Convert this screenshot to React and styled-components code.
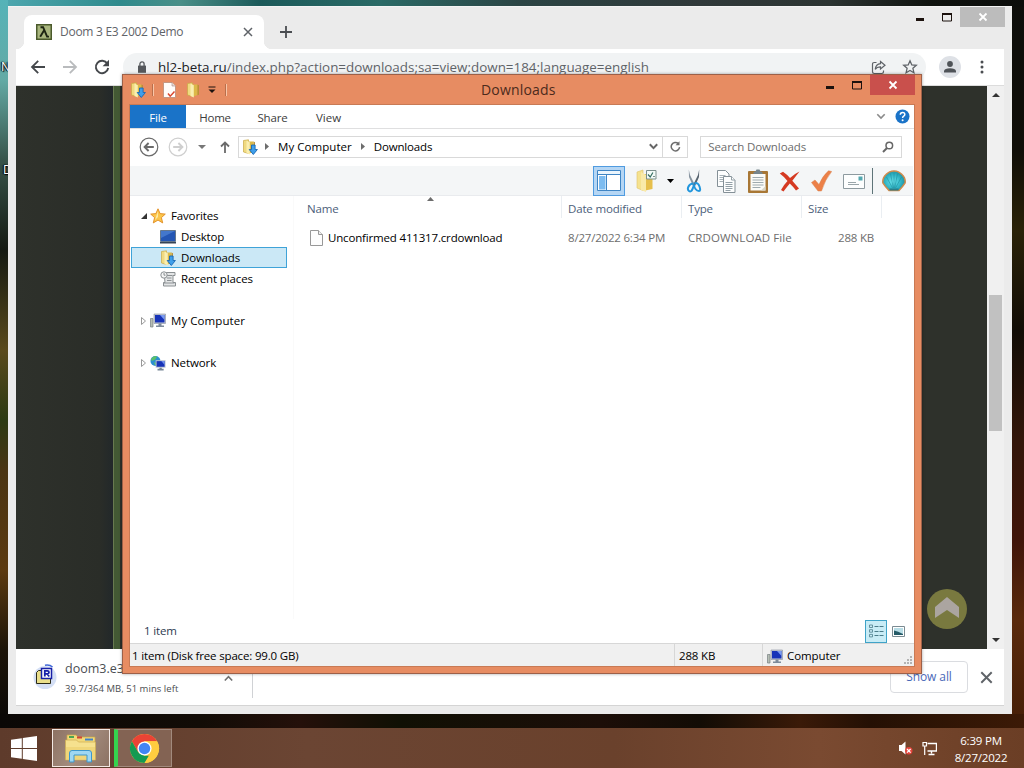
import React from "react";
import styled, { createGlobalStyle } from "styled-components";

const GlobalStyle = createGlobalStyle`
    * {
        box-sizing: border-box;
    }
    body {
        margin: 0;
        overflow: hidden;
        font-family: "Open Sans", "Noto Sans", sans-serif;
    }
    svg {
        display: block;
        flex-shrink: 0;
    }
`

const Desktop = styled.main`
    position: relative;
    width: 1024px;
    height: 768px;
    overflow: hidden;
    background:
        linear-gradient(180deg, #55b3b8 0, #63aaa5 80px, #38544a 160px, #151a12 250px, #5a4a1c 350px, #2c3a12 420px, #4a3412 470px, #5c3a10 570px, #1c1408 650px, #0c0906 714px) 0 0 / 8px 714px no-repeat,
        linear-gradient(90deg, #4fa8b0 0, #2f8a8c 120px, #4a8f88 180px, #1c5a5a 260px, #2a6a66 380px, #2b4444 520px, #30393a 700px, #2c3432 830px, #10130f 930px, #0b0d0b 1024px) 0 0 / 1024px 7px no-repeat,
        linear-gradient(180deg, #0d0e0b 0, #100e08 150px, #2a2208 230px, #120d06 330px, #33160a 440px, #40150a 540px, #5a2a0c 620px, #482008 714px) 1012px 0 / 12px 714px no-repeat,
        linear-gradient(90deg, #0b0806 0, #120c06 200px, #24100a 300px, #101004 400px, #1c0e08 600px, #120c05 700px, #3a1a08 800px, #241004 870px, #3c1a06 1024px);
`

const IconCaption = styled.span`
    position: absolute;
    left: ${({ $x }) => $x}px;
    top: ${({ $y }) => $y}px;
    font-size: 12px;
    line-height: 14px;
    color: white;
    text-shadow: 1px 1px 1px black, 0 0 2px black, -1px 0 1px black;
`

const Text = styled.span`
    font-size: ${({ $size }) => $size || 11.5}px;
    letter-spacing: ${({ $track }) => $track ?? -0.17}px;
    color: ${({ $color }) => $color || "black"};
    line-height: 16px;
    white-space: nowrap;
`

/* ---------- browser ---------- */

const Browser = styled.section`
    position: absolute;
    left: 8px;
    top: 6px;
    width: 1004px;
    height: 708px;
    padding: 0 8px 8px;
    background: #ebebeb;
    border-top: 1px solid #f4f4f4;
    display: flex;
    flex-direction: column;
`

const TabStrip = styled.div`
    height: 42px;
    display: flex;
    align-items: flex-start;
    padding-left: 8px;
    margin-right: -1px;
`

const Tab = styled.div`
    position: relative;
    width: 240px;
    height: 34px;
    margin-top: 8px;
    padding: 0 11px 0 12px;
    background: white;
    border-radius: 8px 8px 0 0;
    display: flex;
    align-items: center;
    gap: 8px;
    &::before, &::after {
        content: "";
        position: absolute;
        bottom: 0;
        width: 8px;
        height: 8px;
    }
    &::before {
        left: -8px;
        background: radial-gradient(circle at 0 0, transparent 8px, white 8.5px);
    }
    &::after {
        right: -8px;
        background: radial-gradient(circle at 100% 0, transparent 8px, white 8.5px);
    }
`

const TabName = styled(Text)`
    flex: 1;
`

const NewTab = styled.div`
    margin: 19px 0 0 16px;
`

const Controls = styled.div`
    margin-left: auto;
    display: flex;
    align-items: flex-start;
`

const ControlGlyph = styled.div`
    width: 27px;
    height: 20px;
    display: flex;
    justify-content: center;
`

const CloseButton = styled.div`
    width: 45px;
    height: 20px;
    background: ${({ $color }) => $color};
    display: flex;
    align-items: center;
    justify-content: center;
`

const BrowserBar = styled.div`
    height: 37px;
    background: white;
    border-bottom: 1px solid #dcdcdc;
    display: flex;
    align-items: center;
    padding: 0 20px 0 13px;
`

const BarButton = styled.div`
    width: 32px;
`

const Omnibox = styled.div`
    flex: 1;
    height: 28px;
    margin-left: -2px;
    border-radius: 14px;
    background: #f1f3f4;
    padding: 0 8px 0 15px;
    display: flex;
    align-items: center;
`

const Url = styled(Text)`
    flex: 1;
    margin-left: 12px;
    b {
        font-weight: normal;
        color: #202124;
    }
`

const Avatar = styled.div`
    width: 22px;
    height: 22px;
    margin: 0 19px 0 13px;
    border-radius: 50%;
    background: #dee1e6;
    display: flex;
    align-items: center;
    justify-content: center;
`

const Page = styled.div`
    flex: 1;
    display: flex;
    background: linear-gradient(90deg, #2e312b 0, #2a2d28 84px, #22282a 97px, #687a50 97px, #687a50 98px, #435934 98px, #435934 104px, #2e312b 104px);
`

const PageBody = styled.div`
    flex: 1;
    display: flex;
    align-items: flex-end;
    justify-content: flex-end;
    padding: 0 20px 20px 0;
`

const PageScroll = styled.div`
    width: 17px;
    background: #f0f0f0;
    display: flex;
    flex-direction: column;
    align-items: center;
    padding: 7px 0;
`

const Thumb = styled.div`
    width: 13px;
    height: 136px;
    margin: 198px 0 auto;
    background: #c1c1c1;
`

const Shelf = styled.div`
    height: 57px;
    background: white;
    border-bottom: 1px solid #d4d4d4;
    display: flex;
    align-items: center;
`

const ShelfItem = styled.div`
    width: 237px;
    height: 44px;
    margin-top: -2px;
    padding-left: 17px;
    border-right: 1px solid #d0d2d5;
    display: flex;
    align-items: center;
    gap: 8px;
`

const ShelfText = styled.div`
    flex: 1;
    padding-top: 5px;
    display: flex;
    flex-direction: column;
    gap: 4px;
`

const ShelfChevron = styled.div`
    margin-right: 18px;
    padding-top: 4px;
`

const ShowAll = styled.div`
    margin-left: auto;
    width: 78px;
    height: 32px;
    border: 1px solid #dadce0;
    border-radius: 4px;
    display: flex;
    align-items: center;
    justify-content: center;
`

const ShelfClose = styled.div`
    margin: 0 11px 0 12px;
`

/* ---------- file manager ---------- */

const Explorer = styled.section`
    position: absolute;
    left: 122px;
    top: 74px;
    width: 800px;
    height: 600px;
    background: #e78c62;
    border: 1px solid #9d6048;
    box-shadow: 0 0 3px rgba(0, 0, 0, 0.35);
    padding: 0 6px 6px;
    display: flex;
    flex-direction: column;
`

const TitleBar = styled.header`
    position: relative;
    height: 29px;
    display: flex;
    align-items: flex-start;
`

const QuickAccess = styled.div`
    display: flex;
    align-items: center;
    height: 29px;
    padding-left: 1px;
`

const QuickRule = styled.div`
    width: 1px;
    height: 12px;
    margin: 0 ${({ $after }) => $after}px 0 ${({ $before }) => $before}px;
    background: #f9c6a8;
    box-shadow: -1px 0 #b96f4c;
`

const WindowTitle = styled(Text)`
    position: absolute;
    left: 352px;
    top: 7px;
`

const Client = styled.div`
    flex: 1;
    border: 1px solid #c87a55;
    background: white;
    display: flex;
    flex-direction: column;
`

const RibbonTabs = styled.div`
    height: 24px;
    border-bottom: 1px solid #dfdfe0;
    display: flex;
    align-items: center;
`

const FileTab = styled.div`
    width: 56px;
    height: 23px;
    background: #1a73c8;
    text-align: center;
    line-height: 22px;
`

const RibbonTab = styled.div`
    width: ${({ $w }) => $w}px;
    height: 23px;
    line-height: 23px;
    text-align: center;
`

const RibbonEnd = styled.div`
    margin-left: auto;
    padding: 0 4px 1px 0;
    display: flex;
    align-items: center;
    gap: 9px;
`

const AddressRow = styled.div`
    height: 37px;
    padding: 0 12px 2px 9px;
    display: flex;
    align-items: center;
`

const NavButton = styled.div`
    margin-right: ${({ $gap }) => $gap}px;
`

const AddressBar = styled.div`
    width: 451px;
    height: 22px;
    border: 1px solid #d9d9d9;
    display: flex;
    align-items: center;
    padding-left: 3px;
`

const Crumb = styled(Text)`
    margin: 0 ${({ $after }) => $after || 0}px 0 ${({ $before }) => $before}px;
`

const RefreshBox = styled.div`
    width: 25px;
    height: 20px;
    margin-left: 4px;
    border-left: 1px solid #d9d9d9;
    display: flex;
    align-items: center;
    justify-content: center;
`

const SearchBox = styled.div`
    width: 202px;
    height: 22px;
    margin-left: 12px;
    border: 1px solid #d9d9d9;
    padding: 0 7px 0 7px;
    display: flex;
    align-items: center;
    justify-content: space-between;
`

const ToolBar = styled.div`
    height: 30px;
    margin-right: 1px;
    background: #f4f6f7;
    border-bottom: 1px solid #e9ebee;
    display: flex;
    align-items: center;
    justify-content: flex-end;
    padding-right: 7px;
`

const PaneToggle = styled.div`
    width: 32px;
    height: 30px;
    margin-bottom: -1px;
    border: 1px solid #4f9be0;
    background: #b5d6f4;
    display: flex;
    align-items: center;
    justify-content: center;
`

const Tool = styled.div`
    margin-left: ${({ $gap }) => $gap}px;
    padding-top: 1px;
`

const ToolRule = styled.div`
    width: 1px;
    height: 26px;
    margin-left: 7px;
    background: #5e7478;
`

const Panes = styled.div`
    flex: 1;
    display: flex;
`

const Tree = styled.nav`
    width: 164px;
    padding-top: 9px;
    border-right: 1px solid #fafafa;
`

const TreeRow = styled.div`
    height: 21px;
    width: 156px;
    margin: 0 0 ${({ $after }) => $after || 0}px 1px;
    padding-left: ${({ $depth }) => $depth ? 28 : 8}px;
    border: 1px solid ${({ $selected }) => $selected ? "#3fa3d8" : "transparent"};
    background: ${({ $selected }) => $selected ? "#cbe8f6" : "transparent"};
    display: flex;
    align-items: center;
    gap: ${({ $depth }) => $depth ? 5 : 2}px;
`

const TreeName = styled(Text)`
    margin-left: ${({ $root }) => $root ? 3 : 0}px;
`

const FileList = styled.div`
    flex: 1;
`

const HeaderRow = styled.div`
    position: relative;
    height: 22px;
    display: flex;
`

const HeaderCell = styled.div`
    width: ${({ $w }) => $w}px;
    height: 22px;
    padding: 4px 0 0 ${({ $pad }) => $pad || 6}px;
    border-right: 1px solid #eaeef2;
    display: flex;
    align-items: center;
`

const SortMark = styled.div`
    position: absolute;
    left: 133px;
    top: 1px;
`

const FileRow = styled.div`
    height: 22px;
    margin-top: 9px;
    display: flex;
    align-items: center;
`

const FileCell = styled.div`
    width: ${({ $w }) => $w}px;
    padding: 0 8px 0 ${({ $pad }) => $pad || 6}px;
    display: flex;
    align-items: center;
    gap: 5px;
    justify-content: ${({ $right }) => $right ? "flex-end" : "flex-start"};
`

const Details = styled.div`
    height: 24px;
    padding: 0 9px 0 14px;
    display: flex;
    align-items: center;
`

const ViewMode = styled.div`
    width: 22px;
    height: 23px;
    margin: 0 5px 0 auto;
    border: 1px solid #3fa3c8;
    background: #c8ecf6;
    display: flex;
    align-items: center;
    justify-content: center;
`

const StatusBar = styled.footer`
    height: 23px;
    border-top: 1px solid #d7d7d7;
    background: #f0f0f0;
    display: flex;
`

const StatusCell = styled.div`
    width: ${({ $w }) => $w ? `${$w}px` : "auto"};
    flex: ${({ $w }) => $w ? "none" : 1};
    padding-top: 2px;
    padding-left: ${({ $pad }) => $pad}px;
    border-left: ${({ $rule }) => $rule ? "1px solid #d7d7d7" : "none"};
    display: flex;
    align-items: center;
    gap: 4px;
`

const Grip = styled.div`
    margin: 9px 1px 0 auto;
`

/* ---------- task bar ---------- */

const TaskBar = styled.footer`
    position: absolute;
    left: 0;
    bottom: 0;
    width: 1024px;
    height: 40px;
    background: linear-gradient(90deg, #5e3b2b 0, #6b4533 30%, #6a412c 60%, #7a4a31 80%, #6b3e25 100%);
    display: flex;
    align-items: center;
`

const Start = styled.div`
    width: 52px;
    padding-left: 11px;
`

const TaskButton = styled.div`
    width: 58px;
    height: 38px;
    margin-right: 4px;
    border: 1px solid ${({ $active }) => $active ? "#f3e9e4" : "#a28a7d"};
    border-left: ${({ $progress }) => $progress ? "4px solid #35d44e" : ""};
    background: ${({ $active }) => $active ? "linear-gradient(120deg, #8d7263, #a38c7e 50%, #8d7263)" : "#836353"};
    display: flex;
    align-items: center;
    justify-content: center;
`

const Tray = styled.div`
    margin-left: auto;
    display: flex;
    align-items: center;
    gap: 9px;
`

const Clock = styled.div`
    width: 70px;
    height: 33px;
    margin: 3px 8px 0 0;
    display: flex;
    flex-direction: column;
    align-items: center;
    justify-content: space-between;
`

/* ---------- icons ---------- */

const Minimize = () => (
    <svg width="10" height="18"><path d="M1 12.5h8" stroke="#1c120e" strokeWidth="3" /></svg>
)

const Maximize = () => (
    <svg width="12" height="18"><path d="M1.5 6.5h9v7.5h-9z" fill="none" stroke="#1c120e" /><path d="M1 7h10" stroke="#1c120e" strokeWidth="2" /></svg>
)

const CloseMark = () => (
    <svg width="10" height="10"><path d="M1.5 1.5l7 7m0-7l-7 7" stroke="white" strokeWidth="1.8" /></svg>
)

const ThinX = ({ size = 10, color = "#5f6368" }) => (
    <svg width={size} height={size} viewBox="0 0 10 10"><path d="M1 1l8 8M9 1l-8 8" stroke={color} strokeWidth="1.5" /></svg>
)

const Arrow = ({ back, color }) => (
    <svg width="18" height="18" viewBox="0 0 18 18">
        <g transform={back ? "" : "matrix(-1 0 0 1 18 0)"} fill="none" stroke={color} strokeWidth="1.8">
            <path d="M16 9H3.5M9.2 2.8L3 9l6.2 6.2" />
        </g>
    </svg>
)

const Reload = () => (
    <svg width="18" height="18" viewBox="0 0 18 18">
        <path d="M14.3 5.6A6.2 6.2 0 1 0 15.2 10" fill="none" stroke="#44474b" strokeWidth="1.9" />
        <path d="M16 1.8v6.4H9.6z" fill="#44474b" />
    </svg>
)

const LambdaIcon = () => (
    <svg width="16" height="16" viewBox="0 0 16 16">
        <path d="M.75.75h14.5v14.5H.75z" fill="#a9b67e" stroke="#4b5a2c" strokeWidth="1.5" />
        <path d="M4.5 3.2h2.6l4 9.4h1.9M8 6.5l-3.8 6.3" fill="none" stroke="#1d2412" strokeWidth="1.9" />
    </svg>
)

const Lock = () => (
    <svg width="8" height="12" viewBox="0 0 8 12">
        <path d="M0 4.6h8v7.2H0z" fill="#55585c" />
        <path d="M1.9 5V3a2.1 2.1 0 0 1 4.2 0v2" fill="none" stroke="#55585c" strokeWidth="1.3" />
    </svg>
)

const ShareIcon = () => (
    <svg width="15" height="15" viewBox="0 0 15 15" fill="none" stroke="#5f6368" strokeWidth="1.2">
        <path d="M5.5 2.5H3.2Q1.5 2.5 1.5 4.2v7.6q0 1.7 1.7 1.7h7.6q1.7 0 1.7-1.7V10.5" />
        <path d="M9.5 1.5L14 5.2 9.5 9V6.8Q6 6.6 4.2 9.4 4.8 4 9.5 3.6z" />
    </svg>
)

const StarOutline = () => (
    <svg width="16" height="16" viewBox="0 0 16 16">
        <path d="M8 1.8l1.8 4.1 4.5.4-3.4 3 1 4.4L8 11.4l-3.9 2.3 1-4.4-3.4-3 4.5-.4z" fill="none" stroke="#5f6368" strokeWidth="1.3" />
    </svg>
)

const Person = () => (
    <svg width="14" height="14" viewBox="0 0 14 14" fill="#4f5358">
        <circle cx="7" cy="4" r="2.9" />
        <path d="M1 12.6V11Q1.6 8.2 7 8.2t6 2.8v1.6z" />
    </svg>
)

const Dots = () => (
    <svg width="4" height="14" fill="#4a4d51"><circle cx="2" cy="2" r="1.5" /><circle cx="2" cy="7" r="1.5" /><circle cx="2" cy="12" r="1.5" /></svg>
)

const Triangle = ({ up, w = 8, h = 4, color = "#333" }) => (
    <svg width={w} height={h}><path d={up ? `M0 ${h}H${w}L${w / 2} 0z` : `M0 0H${w}L${w / 2} ${h}z`} fill={color} /></svg>
)

const Chevron = ({ up, w = 9, color = "#707070", weight = 1.6 }) => (
    <svg width={w} height="7" viewBox="0 0 9 7"><path d={up ? "M.8 5.5L4.5 1.6l3.7 3.9" : "M.8 1.2l3.7 3.9 3.7-3.9"} fill="none" stroke={color} strokeWidth={weight} /></svg>
)

const ToTop = () => (
    <svg width="40" height="40" viewBox="0 0 40 40">
        <circle cx="20" cy="20" r="20" fill="#79793f" />
        <path d="M20 8L32 18v11l-12-8-12 8V18z" fill="#aba5a0" />
    </svg>
)

const RarIcon = () => (
    <svg width="24" height="26" viewBox="0 0 24 26">
        <circle cx="12" cy="14.5" r="11.5" fill="#d4dff5" />
        <path d="M12 2.2Q16.5 1.2 19.5 4" fill="none" stroke="#4068d8" strokeWidth="1.6" />
        <path d="M3.5 9.5l2-2h4v2h8v11h-14z" fill="#eadf8c" stroke="#2b2a18" />
        <path d="M8.5 5.5h10v10h-10z" fill="white" stroke="#1820a8" strokeWidth="1.5" />
        <path d="M11.800 13.500V7.800h2.600q1.600 0 1.600 1.500t-1.600 1.500h-2.400m2 0l2.200 2.700" fill="none" stroke="#1820a8" strokeWidth="1.8" />
    </svg>
)

const Folder = ({ arrow, size = 16 }) => (
    <svg width={size} height={size} viewBox="0 0 16 16">
        <path d="M1.5 1.5L6.5.8V14.5L1.5 13z" fill="#f0da80" stroke="#c9a945" strokeWidth=".7" />
        <path d="M6 2.5h5.5V13L6 15z" fill="#dcb948" />
        <path d="M4.500 1.500L7.800 3.300V15.500L4.500 14z" fill="#faeeb0" />
        <path d="M11.500 2.500l1.500.8v9.500l-1.500.5z" fill="#bb9335" />
        {arrow && <path d="M9.500 6h3.600v4.500h2.300l-4.100 5-4.100-5h2.300z" fill="#3f9fea" stroke="#1767b3" strokeWidth=".9" />}
    </svg>
)

const PageCheck = () => (
    <svg width="15" height="16" viewBox="0 0 15 16">
        <path d="M1.500.5h8.500l3.500 3.500v11.500h-12z" fill="#fffdfb" stroke="#b88d78" strokeWidth=".8" />
        <path d="M10 .5v3.500h3.500" fill="#e5ddd6" stroke="#a88" strokeWidth=".6" />
        <path d="M6 11.500l2.200 2.700L12.500 9.500" fill="none" stroke="#d9482f" strokeWidth="1.5" />
    </svg>
)

const QuickMenu = () => (
    <svg width="8" height="8"><path d="M.5 1h7" stroke="#1c120e" /><path d="M.5 3.5h7L4 7z" fill="#1c120e" /></svg>
)

const Help = () => (
    <svg width="15" height="15" viewBox="0 0 15 15">
        <circle cx="7.5" cy="7.5" r="7" fill="#1a73c8" />
        <path d="M5.300 5.800q0-2.300 2.300-2.300t2.200 2q0 1-1.100 1.700T7.600 9" fill="none" stroke="white" strokeWidth="1.5" />
        <circle cx="7.6" cy="11.2" r="1" fill="white" />
    </svg>
)

const RoundArrow = ({ back, color }) => (
    <svg width="20" height="20" viewBox="0 0 20 20">
        <g transform={back ? "" : "matrix(-1 0 0 1 20 0)"} fill="none" stroke={color}>
            <circle cx="10" cy="10" r="8.8" strokeWidth="1.2" />
            <path d="M14.800 10H6M9.600 6L5.600 10l4 4" strokeWidth="1.9" />
        </g>
    </svg>
)

const UpArrow = () => (
    <svg width="10" height="12" viewBox="0 0 10 12"><path d="M5 12V1.500M1 5.500l4-4 4 4" fill="none" stroke="#6b6b6b" strokeWidth="1.8" /></svg>
)

const Right = () => (
    <svg width="4" height="7"><path d="M0 0l4 3.500L0 7z" fill="#6d6d6d" /></svg>
)

const Refresh = () => (
    <svg width="11" height="11" viewBox="0 0 11 11"><path d="M8.300 2.600A4.200 4.200 0 1 0 9.600 6.200" fill="none" stroke="#6d6d6d" strokeWidth="1.5" /><path d="M9.500.3v4H5.500z" fill="#6d6d6d" /></svg>
)

const Magnifier = () => (
    <svg width="12" height="12" viewBox="0 0 12 12"><circle cx="7.3" cy="4.5" r="3.3" fill="none" stroke="#666" strokeWidth="1.5" /><path d="M5 7L1 11" stroke="#666" strokeWidth="2" /></svg>
)

const PaneIcon = () => (
    <svg width="24" height="22" viewBox="0 0 24 22">
        <path d="M.5.5h23v20H.5z" fill="white" stroke="#3f85c4" />
        <path d="M1 1h22v3H1z" fill="#eaf5fd" />
        <path d="M1 4.500h22M9.500 4.500v16" stroke="#3f85c4" />
        <path d="M2 6h6.500v13.500H2z" fill="#7dbcf0" />
    </svg>
)

const FolderOptions = () => (
    <svg width="21" height="24" viewBox="0 0 21 24">
        <path d="M1 3l6-2v20.500L1 19z" fill="#f5e28f" stroke="#dfc468" strokeWidth=".6" />
        <path d="M7 5h9.500v15L7 22z" fill="#e6bf4c" />
        <path d="M5 3l5 3v17l-5-2z" fill="#f9eaa9" />
        <path d="M10.500 1.500h9.500v8.500h-9.500z" fill="#f4fbf8" stroke="#7b8f8c" />
        <path d="M12 5.500l2.200 2.500 2.700-4.500" fill="none" stroke="#356f61" strokeWidth="1.2" />
        <path d="M17 7.500h2" stroke="#7b8f8c" />
    </svg>
)

const Scissors = () => (
    <svg width="16" height="24" viewBox="0 0 16 24">
        <path d="M2.800.5L4 6l5.200 10.500-2.200.5-4-9z" fill="#8794a0" />
        <path d="M13.200.5L12 6l-5.200 10.500 2.200.5 4-9z" fill="#56636f" />
        <path d="M7.500 14.500q-3.500 0-5 3t.5 4.500 3.500-2T8 15.500q0 2.500 1.500 4.500t3.500 2 .5-4.500-5-3" fill="none" stroke="#2196dd" strokeWidth="2" />
    </svg>
)

const CopyIcon = () => (
    <svg width="19" height="23" viewBox="0 0 19 23" fill="#fdfefe" stroke="#849097">
        <path d="M.5.5h8l3.500 3.500v12.500H.5z" />
        <path d="M2.500 5.500h6M2.500 7.500h5M2.500 9.500h4M2.500 11.500h4" stroke="#a5b0b6" />
        <path d="M6.500 6.500h8l3.500 3.500v12.500H6.500z" />
        <path d="M14.500 6.500v3.500H18M8.500 12.500h7M8.500 14.500h7M8.500 16.500h7M8.500 18.500h7M8.500 20.500h5" stroke="#93a0a7" />
    </svg>
)

const Clipboard = () => (
    <svg width="20" height="24" viewBox="0 0 20 24">
        <path d="M0 3q0-1 1-1h18q1 0 1 1v20q0 1-1 1H1q-1 0-1-1z" fill="#a87735" />
        <path d="M2.500 5h15v16.500h-15z" fill="#fbfbf8" />
        <path d="M17.500 17v4.500H13z" fill="#d9d5c7" />
        <path d="M5.500 5V3q2.500 0 3-2.500h3Q12 3 14.500 3v2z" fill="#77858c" />
        <path d="M4.500 8.500h11M4.500 11h11M4.500 13.500h11M4.500 16h11M4.500 18.500h8" stroke="#9eaaaf" />
    </svg>
)

const DeleteIcon = () => (
    <svg width="22" height="21" viewBox="0 0 22 21"><path d="M.8 2.500L4 .8Q8 3.500 11 7 15 3 20.500.5l-7.200 9.300Q16.500 13.500 20 17.500L17 19.500q-3-4-6.200-7Q7.500 16.500 4.500 20.500L2 19q3-5.500 6.500-9Q5.500 6 .8 2.500z" fill="#d53a22" /></svg>
)

const CheckIcon = () => (
    <svg width="21" height="22" viewBox="0 0 21 22"><path d="M.5 12.500l3.500-2.500 4 4.500Q11.500 6 17.500.8l3.200.7Q14 9.500 10.500 21H7z" fill="#ec8048" stroke="#d9824f" strokeWidth=".5" /></svg>
)

const Envelope = () => (
    <svg width="22" height="15" viewBox="0 0 22 15">
        <path d="M.5.5h21v14H.5z" fill="#fdfefe" stroke="#8d9a9f" />
        <path d="M15.500 2.500h4v4h-4z" fill="#53a8b0" />
        <path d="M5 8.500h8M5 10.500h11" stroke="#9aa6aa" />
    </svg>
)

const Shell = () => (
    <svg width="24" height="22" viewBox="0 0 24 22">
        <defs>
            <radialGradient id="shell" cx=".45" cy=".55" r=".6">
                <stop offset="0" stopColor="#6ce6ee" />
                <stop offset=".6" stopColor="#2fb3c4" />
                <stop offset="1" stopColor="#1f8797" />
            </radialGradient>
        </defs>
        <path d="M7 20.500L3.500 16.500.9 13Q.2 8 4 4.500 7.500.8 12 .9 16.500.8 20 4.500q3.800 3.500 3.100 8.500l-2.600 3.500-3.500 4H7z" fill="url(#shell)" stroke="#cf8a4c" strokeWidth="1.5" />
        <path d="M10.500 18L4.500 7M11.300 18L8.500 3.500M12 18V3M12.700 18l2.800-14.500M13.500 18L19.500 7" stroke="#1f8fa0" strokeWidth=".6" />
        <path d="M7.500 18.500h9v2h-9z" fill="#2b7d88" />
    </svg>
)

const StarIcon = () => (
    <svg width="16" height="16" viewBox="0 0 16 16"><path d="M8 .8l2.100 4.800 5.200.5-3.900 3.500 1.300 5.300L8 12.100l-4.700 2.800 1.300-5.300L.7 6.100l5.200-.5z" fill="#fbc64b" stroke="#e08a1e" strokeWidth=".9" /><path d="M8 3v6l-3 3z" fill="#fde9a5" /></svg>
)

const DesktopIcon = () => (
    <svg width="16" height="14" viewBox="0 0 16 14"><path d="M.5.5h15v11H.5z" fill="#2456b4" stroke="#66788c" /><path d="M1 1h14L1 8z" fill="#4377cc" /><path d="M0 12h16v1.500H0z" fill="#374556" /></svg>
)

const RecentIcon = () => (
    <svg width="16" height="16" viewBox="0 0 16 16" fill="#e3e5e6" stroke="#8b9093">
        <path d="M4 1.500h11v3h-2v7h2.500v3.500H3.500v-3.500H5z" />
        <path d="M6.500 4.500h6M7 7h4.500M7 9.500h4.500M3.500 12h11" />
        <circle cx="4" cy="4" r="3.2" fill="#f4f5f5" /><path d="M4 2v2.200h1.500" />
    </svg>
)

const Monitor = () => (
    <svg width="16" height="15" viewBox="0 0 16 15">
        <path d="M.5 5.500h2.500v8.500H.5z" fill="#b6beb4" stroke="#777f83" strokeWidth=".7" />
        <path d="M4 1h11.500v9.500H4z" fill="#c4c9d4" stroke="#868e9e" strokeWidth=".6" />
        <path d="M5 2h9.500v7.500H5z" fill="#1733b8" /><path d="M10 2h4.500v5z" fill="#7b9bf0" />
        <path d="M8.500 10.500h3v2H14v1.500H6v-1.500h2.500z" fill="#7d8b9b" />
    </svg>
)

const NetworkIcon = () => (
    <svg width="16" height="16" viewBox="0 0 17 16">
        <circle cx="5.8" cy="5.8" r="5.3" fill="#2b8fd0" /><path d="M2 2.500q3-3 5.500-1.500L6 4 3 5.500 1 5zM4 7l3 1.500-1.500 2.300z" fill="#5bc06a" />
        <path d="M6 5h10.500v8H6z" fill="#b9c2d0" /><path d="M7 6h8.500v6H7z" fill="#1733b8" /><path d="M12 6h3.500v4z" fill="#6f90ec" />
        <path d="M10 13h2.500v1.200h2V16H8v-1.800h2z" fill="#788797" />
    </svg>
)

const FileIcon = () => (
    <svg width="14" height="16" viewBox="0 0 14 16"><path d="M1.500.5h8l4 4v11h-12z" fill="#fdfdfd" stroke="#989898" /><path d="M9.500.5v4h4" fill="#eee" stroke="#989898" /></svg>
)

const DetailsIcon = () => (
    <svg width="16" height="14" viewBox="0 0 16 14" fill="none" stroke="#4b7c8a"><path d="M1.500 1h3v2.500h-3zM1.500 5.700h3v2.500h-3zM1.500 10.400h3v2.500h-3z" strokeWidth=".8" /><path d="M6.500 2.500h4M11.500 2.500h4M6.500 7.500h4M11.500 7.500h4M6.500 11.500h4M11.500 11.500h4" /></svg>
)

const ThumbIcon = () => (
    <svg width="13" height="11"><path d="M.5.5h12v10H.5z" fill="white" stroke="#7b8b92" /><path d="M2 2h9v7H2z" fill="#b8dde6" /><path d="M2 4.500q4 .5 9 3.500V9H2z" fill="#265b68" /></svg>
)

const GripIcon = () => (
    <svg width="9" height="9" fill="#b3b3b3"><path d="M6 0h2v2H6zM3 3h2v2H3zM6 3h2v2H6zM0 6h2v2H0zM3 6h2v2H3zM6 6h2v2H6z" /></svg>
)

const WindowsLogo = () => (
    <svg width="26" height="25" viewBox="0 0 26 25" fill="white"><path d="M0 3.800l10.800-1.600V12H0zM11.800 2L26 0v12H11.800zM0 13h10.800v9.800L0 21.300zM11.800 13H26v12l-14.200-2z" /></svg>
)

const Library = () => (
    <svg width="34" height="32" viewBox="0 0 34 32">
        <path d="M3 3h9l2 2h17v10H3z" fill="#f3d979" stroke="#c9a648" strokeWidth=".7" />
        <path d="M5 5h5" stroke="#4aa653" strokeWidth="2" /><path d="M13 5.500h5" stroke="#d24632" strokeWidth="2" /><path d="M21 7.500h8" stroke="#4182c8" strokeWidth="2" />
        <path d="M1.500 8h11l2 2h17v18h-30z" fill="#f6e18e" stroke="#cfae50" strokeWidth=".7" />
        <path d="M2 15h29v12H2z" fill="#f0d67a" />
        <path d="M5.500 30V21q0-2.500 2.500-2.500h17q2.500 0 2.500 2.500v9h-4.500v-7H10v7z" fill="#9fd7f2" stroke="#3d97cc" />
    </svg>
)

const ChromeLogo = () => (
    <svg width="31" height="31" viewBox="0 0 32 32">
        <circle cx="16" cy="16" r="15" fill="#ffcd40" />
        <path d="M3 8.500A15 15 0 0 1 29 8.500H16L9.500 19.750z" fill="#ea4335" />
        <path d="M3 8.500L9.500 19.750 16 23.500h6.500L16 31A15 15 0 0 1 3 8.500z" fill="#149a52" />
        <path d="M22.500 19.750L16 31A15 15 0 0 0 29 8.500H16z" fill="#ffcd40" />
        <circle cx="16" cy="16" r="7.3" fill="white" /><circle cx="16" cy="16" r="5.9" fill="#4285f4" />
    </svg>
)

const Speaker = () => (
    <svg width="14" height="16" viewBox="0 0 14 16">
        <path d="M0 5h2.500L6.500 1.500v13L2.500 11H0z" fill="white" />
        <circle cx="9.8" cy="10.8" r="3.7" fill="#e5453c" /><path d="M8 9l3.600 3.600M11.600 9L8 12.600" stroke="white" strokeWidth="1.3" />
    </svg>
)

const TrayNetwork = () => (
    <svg width="15" height="15" viewBox="0 0 15 15" fill="none" stroke="white"><path d="M5.500 2.500h9v7.500h-9M9.500 10v2.500M6.500 13.500h6" strokeWidth="1.4" /><path d="M1 1.500h3.500V5H1zM2.700 5v9" strokeWidth="1.2" /></svg>
)

const TREE = [
    { name: "Favorites", icon: <StarIcon />, open: true, track: -0.15 },
    { name: "Desktop", icon: <DesktopIcon />, depth: 1, track: -0.2 },
    { name: "Downloads", icon: <Folder arrow />, depth: 1, selected: true, track: -0.1 },
    { name: "Recent places", icon: <RecentIcon />, depth: 1, after: 21, track: -0.12 },
    { name: "My Computer", icon: <Monitor />, after: 21, track: 0.07 },
    { name: "Network", icon: <NetworkIcon />, track: -0.1 },
]

const TreeToggle = ({ open }) => (
    <svg width="8" height="8">
        {open ? <path d="M7 1v6H1z" fill="#333" /> : <path d="M1.500.5l4 3.500-4 3.500z" fill="white" stroke="#999" />}
    </svg>
)

const BrowserWindow = () => (
    <Browser>
        <TabStrip>
            <Tab>
                <LambdaIcon />
                <TabName $size={12} $track={-0.27} $color="#5f6368">Doom 3 E3 2002 Demo</TabName>
                <ThinX />
            </Tab>
            <NewTab>
                <svg width="12" height="12"><path d="M6 0v12M0 6h12" stroke="#4a4d51" strokeWidth="1.8" /></svg>
            </NewTab>
            <Controls>
                <ControlGlyph><Minimize /></ControlGlyph>
                <ControlGlyph><Maximize /></ControlGlyph>
                <CloseButton $color="#bcbcbc"><CloseMark /></CloseButton>
            </Controls>
        </TabStrip>
        <BrowserBar>
            <BarButton><Arrow back color="#44474b" /></BarButton>
            <BarButton><Arrow color="#b9bbbd" /></BarButton>
            <BarButton><Reload /></BarButton>
            <Omnibox>
                <Lock />
                <Url $size={13.4} $track={0.01} $color="#5f6368"><b>hl2-beta.ru</b>/index.php?action=downloads;sa=view;down=184;language=english</Url>
                <ShareIcon />
                <svg width="16" height="1" />
                <StarOutline />
            </Omnibox>
            <Avatar><Person /></Avatar>
            <Dots />
        </BrowserBar>
        <Page>
            <PageBody><ToTop /></PageBody>
            <PageScroll>
                <Triangle up />
                <Thumb />
                <Triangle />
            </PageScroll>
        </Page>
        <Shelf>
            <ShelfItem>
                <RarIcon />
                <ShelfText>
                    <Text $size={12.5} $track={0} $color="#4a4d51">doom3.e3</Text>
                    <Text $size={9.5} $track={0.04} $color="#4a4d51">39.7/364 MB, 51 mins left</Text>
                </ShelfText>
                <ShelfChevron><Chevron up w={11} /></ShelfChevron>
            </ShelfItem>
            <ShowAll><Text $size={12} $track={-0.1} $color="#4a68b8">Show all</Text></ShowAll>
            <ShelfClose><ThinX size={13} /></ShelfClose>
        </Shelf>
    </Browser>
)

const ExplorerWindow = () => (
    <Explorer>
        <TitleBar>
            <QuickAccess>
                <Folder arrow />
                <QuickRule $before={7} $after={8} />
                <PageCheck />
                <svg width="9" height="1" />
                <Folder />
                <svg width="6" height="1" />
                <QuickMenu />
                <QuickRule $before={10} $after={0} />
            </QuickAccess>
            <WindowTitle $size={14} $track={0.18} $color="#4b2a1c">Downloads</WindowTitle>
            <Controls>
                <ControlGlyph><Minimize /></ControlGlyph>
                <ControlGlyph><Maximize /></ControlGlyph>
                <CloseButton $color="#c9504c"><CloseMark /></CloseButton>
            </Controls>
        </TitleBar>
        <Client>
            <RibbonTabs>
                <FileTab><Text $color="white">File</Text></FileTab>
                <RibbonTab $w={58}><Text $track={-0.2} $color="#3c3c3c">Home</Text></RibbonTab>
                <RibbonTab $w={57}><Text $track={-0.15} $color="#3c3c3c">Share</Text></RibbonTab>
                <RibbonTab $w={55}><Text $track={0} $color="#3c3c3c">View</Text></RibbonTab>
                <RibbonEnd>
                    <Chevron w={10} color="#8a8a8a" />
                    <Help />
                </RibbonEnd>
            </RibbonTabs>
            <AddressRow>
                <NavButton $gap={9}><RoundArrow back color="#6b6b6b" /></NavButton>
                <NavButton $gap={10}><RoundArrow color="#cfcfcf" /></NavButton>
                <NavButton $gap={14}><Triangle w={8} h={4} color="#777" /></NavButton>
                <NavButton $gap={8}><UpArrow /></NavButton>
                <AddressBar>
                    <Folder arrow />
                    <svg width="7" height="1" />
                    <Right />
                    <Crumb $before={9} $after={9} $track={0.05}>My Computer</Crumb>
                    <Right />
                    <Crumb $before={9}>Downloads</Crumb>
                    <Controls><Chevron color="#666" weight={2} /></Controls>
                    <RefreshBox><Refresh /></RefreshBox>
                </AddressBar>
                <SearchBox>
                    <Text $track={-0.1} $color="#6d6d6d">Search Downloads</Text>
                    <Magnifier />
                </SearchBox>
            </AddressRow>
            <ToolBar>
                <PaneToggle><PaneIcon /></PaneToggle>
                <Tool $gap={11}><FolderOptions /></Tool>
                <Tool $gap={10}><Triangle w={7} h={4} color="black" /></Tool>
                <Tool $gap={12}><Scissors /></Tool>
                <Tool $gap={15}><CopyIcon /></Tool>
                <Tool $gap={12}><Clipboard /></Tool>
                <Tool $gap={11}><DeleteIcon /></Tool>
                <Tool $gap={10}><CheckIcon /></Tool>
                <Tool $gap={11}><Envelope /></Tool>
                <ToolRule />
                <Tool $gap={9}><Shell /></Tool>
            </ToolBar>
            <Panes>
                <Tree>
                    {TREE.map((item) => (
                        <TreeRow key={item.name} $depth={item.depth} $selected={item.selected} $after={item.after}>
                            {!item.depth && <TreeToggle open={item.open} />}
                            {item.icon}
                            <TreeName $root={!item.depth} $track={item.track}>{item.name}</TreeName>
                        </TreeRow>
                    ))}
                </Tree>
                <FileList>
                    <HeaderRow>
                        <HeaderCell $w={268} $pad={13}><Text $color="#4c607a">Name</Text></HeaderCell>
                        <HeaderCell $w={120}><Text $color="#4c607a">Date modified</Text></HeaderCell>
                        <HeaderCell $w={120}><Text $color="#4c607a">Type</Text></HeaderCell>
                        <HeaderCell $w={80}><Text $color="#4c607a">Size</Text></HeaderCell>
                        <SortMark><Triangle up w={7} h={4} color="#6d6d6d" /></SortMark>
                    </HeaderRow>
                    <FileRow>
                        <FileCell $w={268} $pad={15}><FileIcon /><Text>Unconfirmed 411317.crdownload</Text></FileCell>
                        <FileCell $w={120}><Text $track={-0.2} $color="#6d6d6d">8/27/2022 6:34 PM</Text></FileCell>
                        <FileCell $w={120}><Text $track={0.07} $color="#6d6d6d">CRDOWNLOAD File</Text></FileCell>
                        <FileCell $w={80} $right><Text $track={-0.2} $color="#6d6d6d">288 KB</Text></FileCell>
                    </FileRow>
                </FileList>
            </Panes>
            <Details>
                <Text $color="#2c3a50">1 item</Text>
                <ViewMode><DetailsIcon /></ViewMode>
                <ThumbIcon />
            </Details>
            <StatusBar>
                <StatusCell $pad={2}><Text>1 item (Disk free space: 99.0 GB)</Text></StatusCell>
                <StatusCell $w={88} $pad={4} $rule><Text>288 KB</Text></StatusCell>
                <StatusCell $w={152} $pad={4} $rule>
                    <Monitor />
                    <Text $track={-0.1}>Computer</Text>
                    <Grip><GripIcon /></Grip>
                </StatusCell>
            </StatusBar>
        </Client>
    </Explorer>
)

const App = () => {

    return (
        <Desktop>
            <GlobalStyle />
            <IconCaption $x={1} $y={60}>N</IconCaption>
            <IconCaption $x={3} $y={163}>D</IconCaption>
            <BrowserWindow />
            <ExplorerWindow />
            <TaskBar>
                <Start><WindowsLogo /></Start>
                <TaskButton $active><Library /></TaskButton>
                <TaskButton $progress><ChromeLogo /></TaskButton>
                <Tray>
                    <Speaker />
                    <TrayNetwork />
                    <Clock>
                        <Text $track={-0.2} $color="white">6:39 PM</Text>
                        <Text $track={-0.2} $color="white">8/27/2022</Text>
                    </Clock>
                </Tray>
            </TaskBar>
        </Desktop>
    )
}

export default App;
